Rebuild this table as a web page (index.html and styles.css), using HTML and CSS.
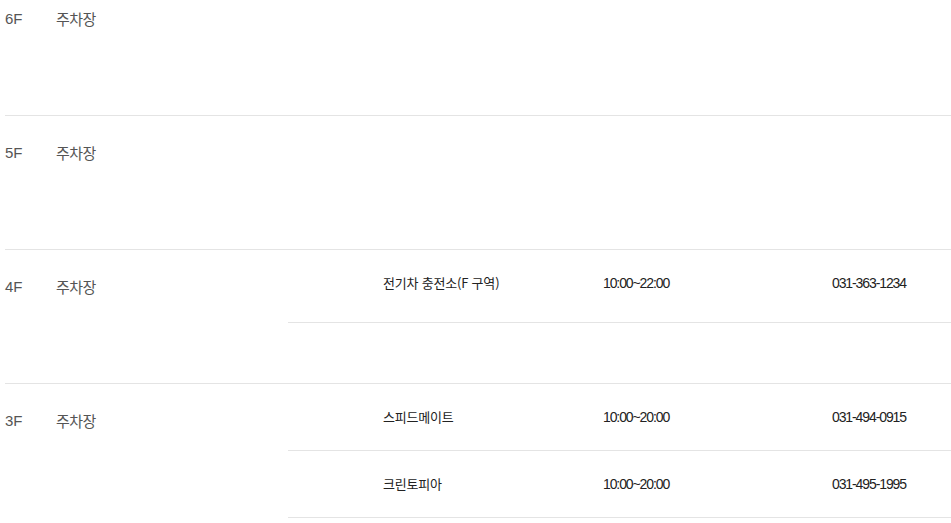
FILE: index.html
```html
<!DOCTYPE html>
<html lang="ko">
<head>
<meta charset="utf-8">
<title>층별 안내</title>
<link rel="stylesheet" href="styles.css">
</head>
<body>
<div class="floor-list">
  <div class="floor">
    <div class="floor-label">6F</div>
    <div class="floor-name">주차장</div>
    <div class="shops"></div>
  </div>
  <div class="floor">
    <div class="floor-label">5F</div>
    <div class="floor-name">주차장</div>
    <div class="shops"></div>
  </div>
  <div class="floor">
    <div class="floor-label">4F</div>
    <div class="floor-name">주차장</div>
    <div class="shops">
      <div class="shop shop--tall">
        <div class="shop-name">전기차 충전소(F 구역)</div>
        <div class="shop-hours">10:00~22:00</div>
        <div class="shop-phone">031-363-1234</div>
      </div>
    </div>
  </div>
  <div class="floor">
    <div class="floor-label">3F</div>
    <div class="floor-name">주차장</div>
    <div class="shops">
      <div class="shop">
        <div class="shop-name">스피드메이트</div>
        <div class="shop-hours">10:00~20:00</div>
        <div class="shop-phone">031-494-0915</div>
      </div>
      <div class="shop">
        <div class="shop-name">크린토피아</div>
        <div class="shop-hours">10:00~20:00</div>
        <div class="shop-phone">031-495-1995</div>
      </div>
    </div>
  </div>
</div>
</body>
</html>
```

FILE: styles.css
```css
html, body {
  margin: 0;
  padding: 0;
  background: #fff;
}

body {
  font-family: "Noto Sans CJK KR", "Noto Sans", sans-serif;
  color: #333;
  overflow: hidden;
}

.floor-list {
  margin-top: -18px;
  margin-left: 5px;
}

.floor {
  display: flex;
  align-items: flex-start;
  min-height: 134px;
  box-sizing: border-box;
  padding-bottom: 60px;
  border-bottom: 1px solid #e4e4e4;
}

.floor-label,
.floor-name {
  padding-top: 27px;
  font-size: 15px;
  line-height: 20px;
  color: #555;
}

.floor-label {
  width: 51px;
  font-family: "Liberation Sans", "Noto Sans CJK KR", sans-serif;
}

.floor-name {
  width: 232px;
  letter-spacing: -0.6px;
}

.shops {
  flex: 1;
}

.shop {
  display: flex;
  align-items: flex-start;
  box-sizing: border-box;
  height: 67px;
  padding-top: 23px;
  border-bottom: 1px solid #e4e4e4;
  font-size: 13px;
  line-height: 20px;
  color: #222;
}

.shop--tall {
  height: 73px;
}

.shop-name {
  margin-left: 95px;
  width: 220px;
  letter-spacing: -0.2px;
}

.shop-hours,
.shop-phone {
  font-family: "Liberation Sans", sans-serif;
  font-size: 14px;
  letter-spacing: -1.1px;
}

.shop-hours {
  width: 229px;
}
```
